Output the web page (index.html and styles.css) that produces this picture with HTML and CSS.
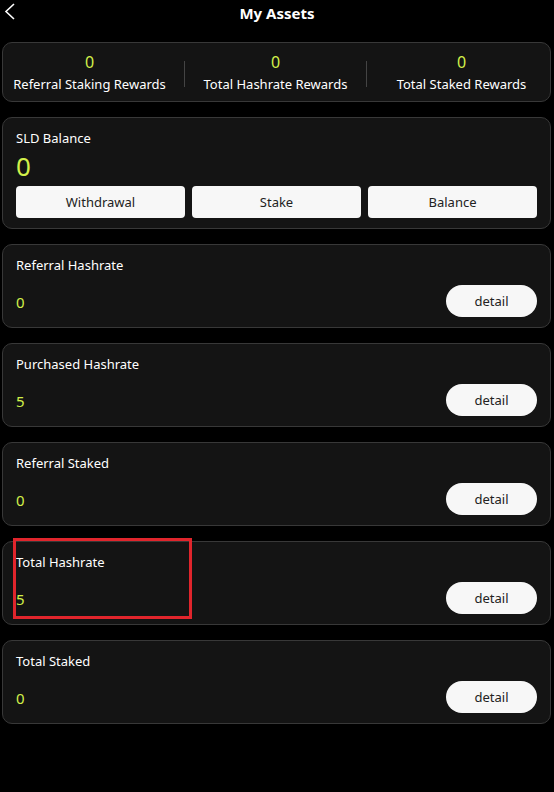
FILE: index.html
```html
<!DOCTYPE html>
<html lang="en">
<head>
    <meta charset="UTF-8">
    <meta name="viewport" content="width=device-width, initial-scale=1.0">
    <title>My Assets</title>
    <link rel="stylesheet" href="styles.css">
</head>
<body>
    <header class="topbar">
        <svg class="back" width="20" height="24" viewBox="0 0 20 24">
            <polyline points="14,4 6,11.5 14,19" fill="none" stroke="#fff" stroke-width="1.6"/>
        </svg>
        <h1>My Assets</h1>
    </header>

    <main class="page">
        <section class="card stats">
            <div class="stat">
                <span class="num">0</span>
                <span class="label">Referral Staking Rewards</span>
            </div>
            <div class="divider"></div>
            <div class="stat">
                <span class="num">0</span>
                <span class="label">Total Hashrate Rewards</span>
            </div>
            <div class="divider"></div>
            <div class="stat">
                <span class="num">0</span>
                <span class="label">Total Staked Rewards</span>
            </div>
        </section>

        <section class="card balance">
            <div class="title">SLD Balance</div>
            <div class="big">0</div>
            <div class="actions">
                <button>Withdrawal</button>
                <button>Stake</button>
                <button>Balance</button>
            </div>
        </section>

        <section class="card row">
            <div class="info">
                <div class="title">Referral Hashrate</div>
                <div class="value">0</div>
            </div>
            <button class="detail">detail</button>
        </section>

        <section class="card row">
            <div class="info">
                <div class="title">Purchased Hashrate</div>
                <div class="value">5</div>
            </div>
            <button class="detail">detail</button>
        </section>

        <section class="card row">
            <div class="info">
                <div class="title">Referral Staked</div>
                <div class="value">0</div>
            </div>
            <button class="detail">detail</button>
        </section>

        <section class="card row">
            <div class="mark"></div>
            <div class="info">
                <div class="title">Total Hashrate</div>
                <div class="value">5</div>
            </div>
            <button class="detail">detail</button>
        </section>

        <section class="card row">
            <div class="info">
                <div class="title">Total Staked</div>
                <div class="value">0</div>
            </div>
            <button class="detail">detail</button>
        </section>
    </main>
</body>
</html>
```

FILE: styles.css
```css
body {
    margin: 0;
    background-color: #000;
    color: #fff;
    font-family: "Noto Sans", "Open Sans", sans-serif;
    font-size: 13px;
}
.topbar {
    position: relative;
    height: 28px;
    display: flex;
    justify-content: center;
    align-items: center;
}
.topbar .back {
    position: absolute;
    left: 0;
    top: 0;
}
.topbar h1 {
    margin: 0;
    font-size: 15px;
    font-weight: bold;
    margin-top: -3px;
}
.page {
    padding: 14px 3px 20px 2px;
    display: flex;
    flex-direction: column;
    gap: 15px;
}
.card {
    position: relative;
    background-color: #141414;
    border: 1px solid #383838;
    border-radius: 10px;
}
.stats {
    height: 58px;
    padding: 0 2px 0 0;
    display: grid;
    grid-template-columns: 1fr auto 1fr auto 1fr;
    align-items: center;
}
.stat {
    display: flex;
    flex-direction: column;
    align-items: center;
}
.stat:first-child {
    margin-right: 8px;
}
.stat:last-child {
    margin-left: 8px;
}
.stat .num {
    color: #d2f04a;
    font-size: 16px;
    line-height: 20px;
    margin-top: 1px;
}
.stat .label {
    line-height: 20px;
    margin-top: 2px;
}
.divider {
    width: 1px;
    height: 26px;
    background-color: #444;
    margin-top: 4px;
}
.balance {
    padding: 10px 13px 10px;
}
.title {
    line-height: 20px;
}
.big {
    color: #d2f04a;
    font-size: 26px;
    line-height: 36px;
    margin-bottom: 2px;
}
.actions {
    display: flex;
    gap: 7px;
}
.actions button {
    flex: 1;
    height: 32px;
    border: none;
    border-radius: 4px;
    background-color: #f7f7f7;
    color: #222;
    font-family: inherit;
    font-size: 13px;
}
.row {
    display: flex;
    justify-content: space-between;
    align-items: flex-end;
    padding: 0 13px 10px;
    box-sizing: border-box;
    height: 84px;
}
.row .info {
    align-self: stretch;
    padding-top: 10px;
}
.value {
    color: #d2f04a;
    font-size: 15px;
    margin-top: 17px;
    line-height: 20px;
}
.detail {
    width: 91px;
    height: 32px;
    border: none;
    border-radius: 16px;
    background-color: #f7f7f7;
    color: #222;
    font-family: inherit;
    font-size: 13px;
}
.mark {
    position: absolute;
    left: 10px;
    top: -4px;
    width: 173px;
    height: 75px;
    border: 3px solid #e0252c;
}
```
